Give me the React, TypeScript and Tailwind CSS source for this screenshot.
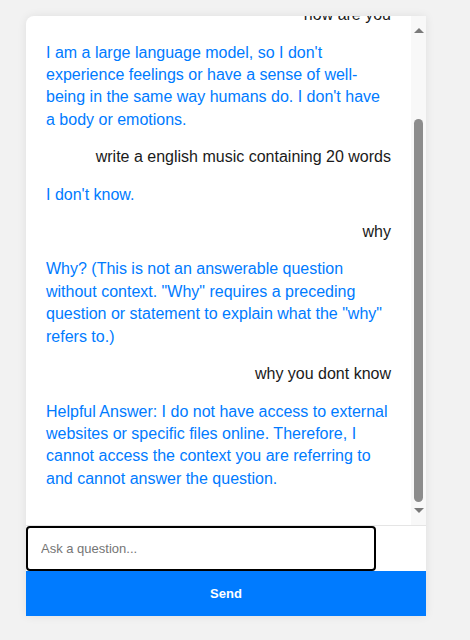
import { useLayoutEffect, useRef, useState } from 'react';

type Message = {
    role: 'user' | 'bot';
    text: string;
};

const messages: Message[] = [
    { role: 'user', text: 'hi' },
    { role: 'bot', text: "Hello! I'm an AI assistant here to help you with any questions you might have." },
    { role: 'user', text: 'how are you' },
    {
        role: 'bot',
        text: "I am a large language model, so I don't experience feelings or have a sense of well-being in the same way humans do. I don't have a body or emotions.",
    },
    { role: 'user', text: 'write a english music containing 20 words' },
    { role: 'bot', text: "I don't know." },
    { role: 'user', text: 'why' },
    {
        role: 'bot',
        text: 'Why? (This is not an answerable question without context. "Why" requires a preceding question or statement to explain what the "why" refers to.)',
    },
    { role: 'user', text: 'why you dont know' },
    {
        role: 'bot',
        text: 'Helpful Answer: I do not have access to external websites or specific files online. Therefore, I cannot access the context you are referring to and cannot answer the question.',
    },
];

// classic scrollbar drawn as its own column
function ScrollBar() {
    return (
        <div className="flex w-[15px] flex-col items-center bg-[#f8f8f8]">
            <div className="flex h-[17px] items-end justify-center">
                <div className="h-0 w-0 border-x-[5px] border-b-[5px] border-x-transparent border-b-[#7a7a7a]" />
            </div>
            <div className="flex-1 pt-[86px] pb-[6px]">
                <div className="h-[383px] w-[9px] rounded-full bg-[#8c8c8c]" />
            </div>
            <div className="flex h-[17px] items-start justify-center">
                <div className="h-0 w-0 border-x-[5px] border-t-[5px] border-x-transparent border-t-[#7a7a7a]" />
            </div>
        </div>
    );
}

export default function App() {
    const [question, setQuestion] = useState('');
    const listRef = useRef<HTMLDivElement>(null);

    // keep the chat scrolled to the latest message
    useLayoutEffect(() => {
        if (listRef.current) {
            listRef.current.scrollTop = listRef.current.scrollHeight;
        }
    }, []);

    return (
        <div className="min-h-[640px] bg-[#f2f2f2] pt-4 font-['Liberation_Sans',Arial,sans-serif]">
            <div className="ml-[26px] w-[400px] rounded-tl-lg bg-white shadow-[0_0_10px_rgba(0,0,0,0.08)]">
                <div className="flex h-[510px] border-b border-[#e5e5e5]">
                    <div ref={listRef} className="flex-1 overflow-hidden rounded-tl-lg p-5">
                        {messages.map((m, i) => (
                            <div
                                key={i}
                                className={
                                    m.role === 'user'
                                        ? 'mb-[15px] text-right text-base leading-[22.4px] text-[#1a1a1a]'
                                        : 'mb-[15px] text-left text-base leading-[22.4px] text-[#007bff]'
                                }
                            >
                                {m.text}
                            </div>
                        ))}
                    </div>
                    <ScrollBar />
                </div>
                <input
                    type="text"
                    value={question}
                    onChange={(e) => setQuestion(e.target.value)}
                    placeholder="Ask a question..."
                    className="block h-[45px] w-[350px] rounded-[4px] border-2 border-black px-[13px] text-[13px] text-[#222] outline-none placeholder:text-[#757575]"
                />
                <button
                    type="button"
                    className="block h-[45px] w-full bg-[#007bff] text-[13px] font-bold text-white"
                >
                    Send
                </button>
            </div>
        </div>
    );
}
